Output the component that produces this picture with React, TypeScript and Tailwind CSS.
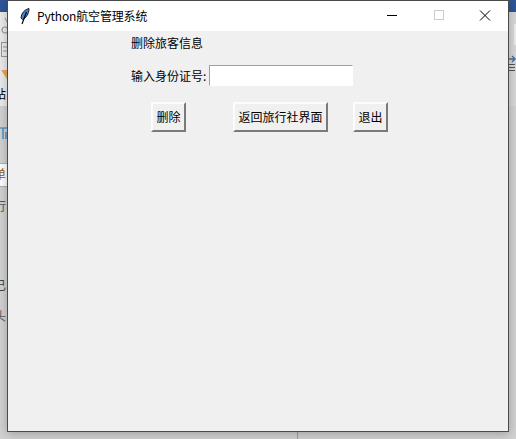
const cjk = "font-['Microsoft_YaHei','Noto_Sans_CJK_SC','Liberation_Sans',sans-serif]";

function Btn({ label, className }: { label: string; className: string }) {
  return (
    <div
      className={`h-[30px] flex items-center justify-center text-[12px] leading-none text-black bg-[#f0f0f0] border-2 border-t-[#fcfcfc] border-l-[#fcfcfc] border-r-[#7a7a7a] border-b-[#7a7a7a] ${className}`}
    >
      {label}
    </div>
  );
}

function Feather() {
  return (
    <svg width="10" height="17" viewBox="0 0 10 17" className="shrink-0">
      <path d="M9 0.5 C5 1.5 1.5 4.5 1 10 L2.5 11.5 C6 10 9 6 9 0.5 Z" fill="#4a7fc4" stroke="#10202f" strokeWidth="1" />
      <path d="M6.5 4 L2 16" stroke="#000" strokeWidth="1.2" fill="none" />
    </svg>
  );
}

export default function App() {
  return (
    <div className={`relative w-[516px] h-[439px] overflow-hidden bg-[#d2d2d2] ${cjk}`}>
      <div className="absolute left-0 top-0 w-full h-[12px] bg-[#2f5597]" />
      <div className="absolute left-0 top-[12px] w-[7px] h-[94px] bg-[#ececec]" />
      <div className="absolute left-[509px] top-[12px] w-[7px] h-[94px] bg-[#d8d8d8]" />
      <div className="absolute left-[514px] top-[24px] w-[2px] h-[21px] bg-[#eeeeee]" />
      <div className="absolute left-0 top-[163px] w-[7px] h-[24px] bg-white border-y border-[#b0b0b0]" />
      <div className="absolute left-[297px] top-[432px] w-px h-[7px] bg-[#a0a0a0]" />

      <svg className="absolute left-0 top-[16px]" width="7" height="20" viewBox="0 0 7 20">
        <circle cx="5" cy="14" r="3" fill="none" stroke="#999" strokeWidth="1.2" />
        <path d="M5 2 L7 6" stroke="#aaa" strokeWidth="1.2" />
      </svg>
      <svg className="absolute left-0 top-[41px]" width="7" height="18" viewBox="0 0 7 18">
        <rect x="1.5" y="1.5" width="7" height="14" fill="none" stroke="#999" />
        <path d="M3 6 H7 M3 10 H7" stroke="#999" />
      </svg>
      <svg className="absolute left-0 top-[68px]" width="7" height="12" viewBox="0 0 7 12">
        <path d="M1 2 H7 V11 Z" fill="#e8a858" />
      </svg>
      <svg className="absolute left-0 top-[126px]" width="7" height="14" viewBox="0 0 7 14">
        <path d="M0 2 H7 M3 2 V13 M6 6 V13" stroke="#2f7fc4" strokeWidth="1.2" fill="none" />
      </svg>

      <div className="absolute left-[-6px] top-[88px] text-[12px] leading-none text-black">站</div>
      <div className="absolute left-[-6px] top-[168px] text-[12px] leading-none text-[#8a5a20]">单</div>
      <div className="absolute left-[-6px] top-[200px] text-[12px] leading-none text-[#555]">行</div>
      <div className="absolute left-[-6px] top-[279px] text-[12px] leading-none text-[#444]">已</div>
      <div className="absolute left-[-6px] top-[310px] text-[12px] leading-none text-[#555]">头</div>

      <svg className="absolute left-[509px] top-[55px]" width="7" height="18" viewBox="0 0 7 18">
        <path d="M0 4 H5 M3 1 L6 4 L3 7" stroke="#3f6fa8" strokeWidth="1.4" fill="none" />
        <path d="M0 9.5 H6 M0 12.5 H6 M0 15.5 H6" stroke="#555" strokeWidth="1" />
      </svg>

      <div className="absolute left-[7px] top-0 w-[502px] h-[432px] flex flex-col border border-[#4a4a4a] bg-[#f0f0f0] shadow-[0_2px_10px_rgba(0,0,0,0.25)]">
        <div className="h-[30px] shrink-0 bg-white flex items-center pl-[12px]">
          <Feather />
          <span className="ml-[7px] text-[12px] leading-none tracking-[-0.17px] text-black">Python航空管理系统</span>
          <div className="ml-auto flex items-center">
            <svg width="46" height="30" viewBox="0 0 46 30"><path d="M17 14.5 H27" stroke="#000" strokeWidth="1" /></svg>
            <svg width="46" height="30" viewBox="0 0 46 30"><rect x="18.5" y="9.5" width="9" height="9" fill="none" stroke="#cccccc" strokeWidth="1" /></svg>
            <svg width="46" height="30" viewBox="0 0 46 30"><path d="M18 9.5 L28 19.5 M28 9.5 L18 19.5" stroke="#000" strokeWidth="1" /></svg>
          </div>
        </div>
        <div className="flex-1 flex flex-col pl-[123px]">
          <div className="mt-[5px] h-[14px] text-[12px] leading-[14px] text-black">删除旅客信息</div>
          <div className="mt-[15px] h-[21px] flex items-center text-[12px] text-black">
            <span>输入身份证号:</span>
            <div className="ml-[3px] w-[144px] h-[21px] bg-white border border-transparent border-t-[#a0a0a0] border-l-[#a0a0a0]" />
          </div>
          <div className="mt-[16px] flex">
            <Btn label="删除" className="ml-[20px] w-[35px]" />
            <Btn label="返回旅行社界面" className="ml-[47px] w-[95px]" />
            <Btn label="退出" className="ml-[25px] w-[35px]" />
          </div>
        </div>
      </div>
    </div>
  );
}
